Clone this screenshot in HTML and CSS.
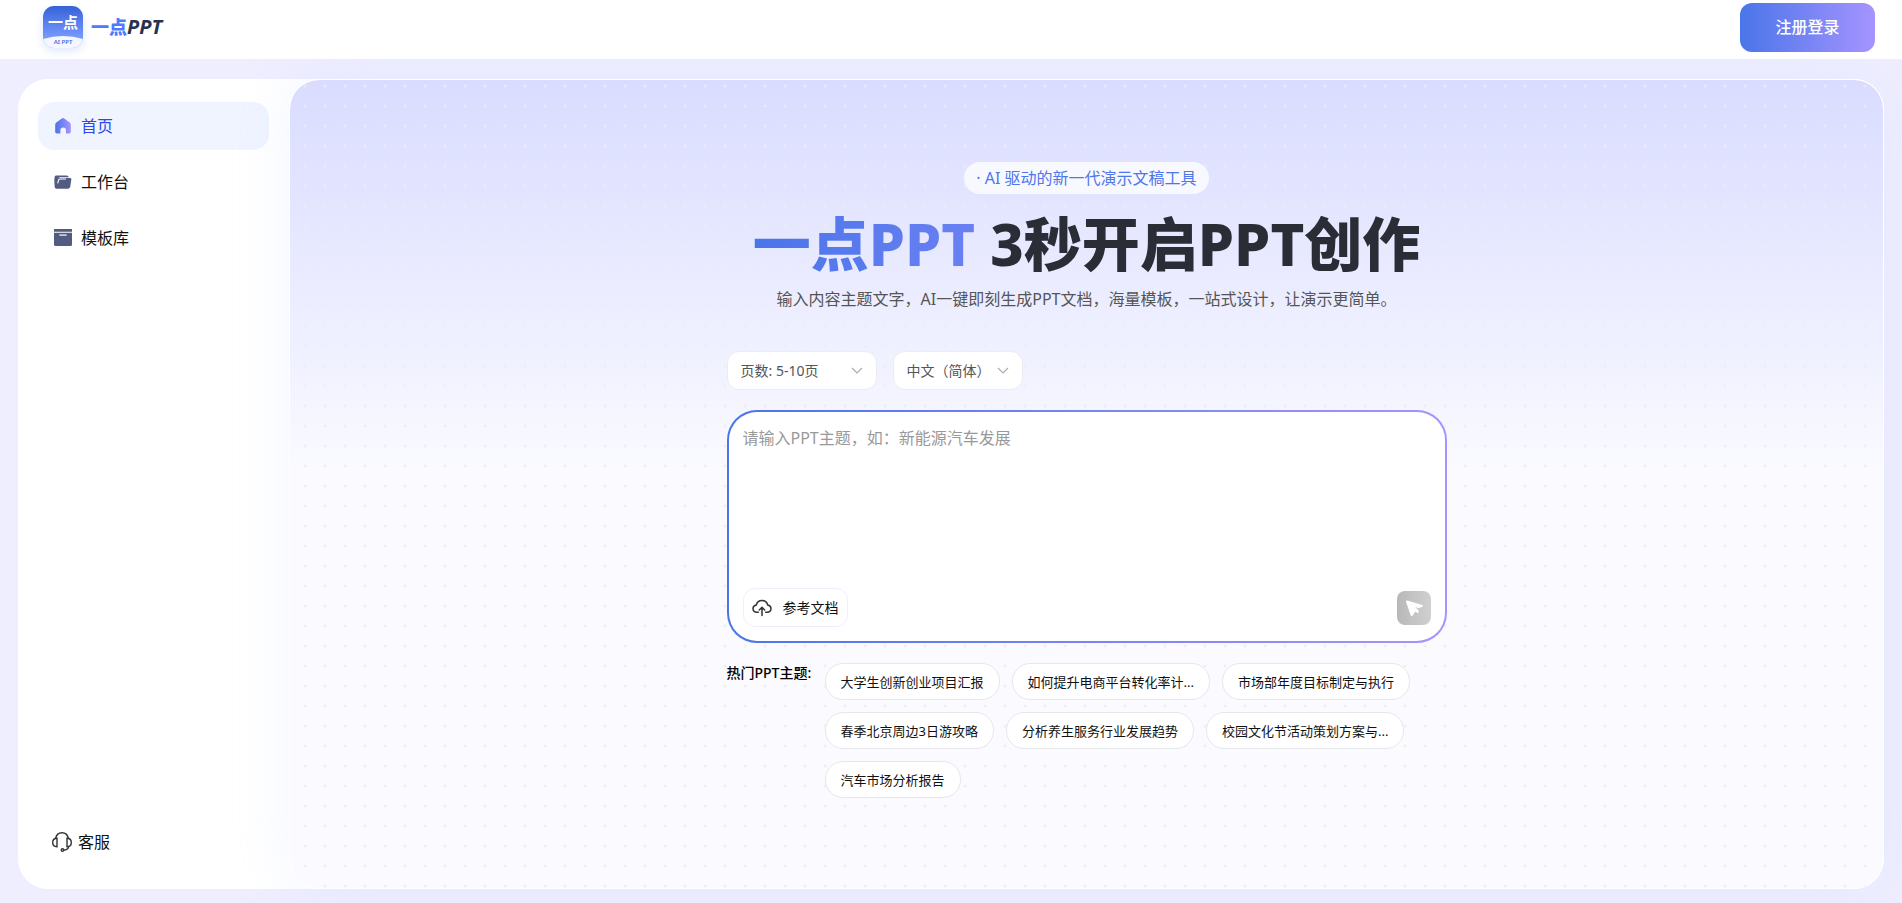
FILE: index.html
```html
<!DOCTYPE html>
<html lang="zh-CN">
<head>
<meta charset="utf-8">
<title>一点PPT</title>
<meta name="viewport" content="width=device-width, initial-scale=1">
<link rel="stylesheet" href="styles.css">
</head>
<body>
<header class="topbar">
  <a class="brand" href="#">
    <span class="brand-mark">
      <svg class="brand-wave" viewBox="0 0 40 42" aria-hidden="true"><path d="M0 33Q20 27 40 33V42H0Z" fill="#f4f7ff"/></svg>
      <span class="brand-glyph">一点</span>
      <span class="brand-sub">AI PPT</span>
    </span>
    <span class="brand-name"><span class="brand-cn">一点</span>PPT</span>
  </a>
  <button class="login" type="button">注册登录</button>
</header>
<div class="shell">
  <aside class="sidebar">
    <nav class="nav">
      <a class="nav-item active" href="#">
        <svg class="nav-icon" viewBox="0 0 18 18" aria-hidden="true">
          <defs><linearGradient id="home" x1="0" x2="1"><stop offset="0" stop-color="#4a73e8"/><stop offset="1" stop-color="#a594ff"/></linearGradient></defs>
          <path d="M7.8 1.5Q9 .6 10.200 1.500L15.700 5.600Q16.800 6.500 16.800 7.800V14.800Q16.800 16.500 15.100 16.500H12V13.200Q12 10.500 9.200 10.500T6.400 13.200V16.500H2.900Q1.200 16.500 1.200 14.800V7.800Q1.200 6.500 2.300 5.600Z" fill="url(#home)"/>
        </svg>
        <span>首页</span>
      </a>
      <a class="nav-item" href="#">
        <svg class="nav-icon" viewBox="0 0 18 18" aria-hidden="true">
          <path d="M2 2.500H12.500Q14.500 2.500 14.800 4.300H6.200Q3.700 4.300 3.200 6.800L2 13.500Q.6 12 .6 10V4Q.6 2.500 2 2.500Z" fill="#525c80"/>
          <path d="M.6 5.500L6.400 4.900H16.300Q17.500 5 17.300 6.500L16.300 13.600Q16 15.700 14 15.700H2.600Q.6 15.700 .6 13.500Z" fill="#525c80"/>
          <path d="M3.700 10.300L4.500 7.300Q4.800 6 6.200 6H14.500" fill="none" stroke="#fff" stroke-width="1.100" stroke-dasharray="11 9"/>
        </svg>
        <span>工作台</span>
      </a>
      <a class="nav-item" href="#">
        <svg class="nav-icon" viewBox="0 0 18 18" aria-hidden="true">
          <path d="M.5 0H17.500Q18 0 18 .5V2.700H0V.5Q0 0 .5 0ZM0 3.700H18V15.500Q18 17 16.500 17H1.500Q0 17 0 15.500Z" fill="#525c80"/>
          <path d="M5.300 5.200H12.700V6.500Q12.700 7 12 7H6Q5.300 7 5.300 6.500Z" fill="#c9cddd"/>
        </svg>
        <span>模板库</span>
      </a>
    </nav>
    <a class="service" href="#">
      <svg class="service-icon" viewBox="0 0 20 20" fill="none" stroke="#333" stroke-width="1.400" aria-hidden="true">
        <path d="M3.600 6.500C4.300 3 6.800.8 10 .8S15.700 3 16.400 6.500"/>
        <path d="M5 6.300V14.700C2 14.700.7 13 .7 10.500S2 6.300 5 6.300ZM15 6.300V14.700C18 14.700 19.300 13 19.300 10.500S18 6.300 15 6.300Z"/>
        <path d="M16.700 14.200C16.500 17 14.500 18 11.800 18"/><circle cx="10.500" cy="18" r="1.300"/>
      </svg>
      <span>客服</span>
    </a>
  </aside>
  <main class="main">
    <div class="content">
      <p class="tagline"><span>· AI 驱动的新一代演示文稿工具</span></p>
      <h1 class="title"><span class="title-brand">一点PPT</span> 3秒开启PPT创作</h1>
      <p class="subtitle">输入内容主题文字，AI一键即刻生成PPT文档，海量模板，一站式设计，让演示更简单。</p>
      <div class="options">
        <div class="select pages">
          <select aria-label="页数"><option>页数: 5-10页</option></select>
          <svg class="chevron" viewBox="0 0 12 8" aria-hidden="true"><path d="M1 1L6 6L11 1"/></svg>
        </div>
        <div class="select lang">
          <select aria-label="语言"><option>中文（简体）</option></select>
          <svg class="chevron" viewBox="0 0 12 8" aria-hidden="true"><path d="M1 1L6 6L11 1"/></svg>
        </div>
      </div>
      <form class="prompt">
        <textarea class="prompt-text" aria-label="PPT主题" placeholder="请输入PPT主题，如：新能源汽车发展"></textarea>
        <div class="prompt-bar">
          <button class="upload" type="button">
            <svg class="upload-icon" viewBox="0 0 20 20" fill="none" stroke="#333" stroke-width="1.500" stroke-linecap="round" stroke-linejoin="round" aria-hidden="true">
              <path d="M6.300 14.300H5C2.600 14.300 1 12.700 1 10.600C1 8.700 2.300 7.300 4.300 7C5 4.200 7.200 2.600 10 2.600S15 4.200 15.700 7C17.700 7.300 19 8.700 19 10.600C19 12.700 17.400 14.300 15 14.300H13.700"/>
              <path d="M10 17.500V9.500M7.300 12L10 9.300L12.700 12"/>
            </svg>
            <span>参考文档</span>
          </button>
          <button class="send" type="submit" aria-label="发送">
            <svg class="send-icon" viewBox="0 0 34 34" aria-hidden="true"><path d="M10.200 9.600L25.300 13.900Q27 14.700 25.300 15.800L21.600 17.300L18 15.800L21.600 19.400V21.500Q21 22.600 20 21.700L18.400 20.600L15.300 25Q14.300 25.700 13.700 24.500L9.100 10.900Q8.900 9.300 10.200 9.600Z" fill="#fff"/></svg>
          </button>
        </div>
      </form>
      <div class="topics">
        <span class="topics-label">热门PPT主题:</span>
        <div class="chips">
          <button class="chip" type="button">大学生创新创业项目汇报</button>
          <button class="chip" type="button">如何提升电商平台转化率计...</button>
          <button class="chip" type="button">市场部年度目标制定与执行</button>
          <button class="chip" type="button">春季北京周边3日游攻略</button>
          <button class="chip" type="button">分析养生服务行业发展趋势</button>
          <button class="chip" type="button">校园文化节活动策划方案与...</button>
          <button class="chip" type="button">汽车市场分析报告</button>
        </div>
      </div>
    </div>
  </main>
</div>
</body>
</html>
```
FILE: styles.css
```css
* {
  box-sizing: border-box;
}

body {
  margin: 0;
  min-height: 100vh;
  display: flex;
  flex-direction: column;
  background: #efeeff;
  color: #111;
  font-family: "Noto Sans", "Noto Sans CJK SC", sans-serif;
  font-size: 16px;
  line-height: 24px;
}

a {
  color: inherit;
  text-decoration: none;
}

button,
select,
textarea {
  font: inherit;
  color: inherit;
}

button {
  cursor: pointer;
}

.topbar {
  position: relative;
  z-index: 1;
  display: flex;
  align-items: center;
  justify-content: space-between;
  height: 59px;
  padding: 0 27px 5px 43px;
  background: #fff;
}

.brand {
  display: flex;
  align-items: center;
  gap: 8px;
}

.brand-mark {
  display: grid;
  grid-template-rows: 32px 10px;
  justify-items: center;
  width: 40px;
  height: 42px;
  border-radius: 11px;
  overflow: hidden;
  background: linear-gradient(#3562d8, #7d9dff 80%);
  box-shadow: 0 3px 10px #e0e7ff;
}

.brand-wave {
  grid-area: 1 / 1 / 3 / 2;
  width: 40px;
  height: 42px;
}

.brand-glyph {
  grid-area: 1 / 1;
  color: #fff;
  font-size: 15px;
  font-weight: 700;
  line-height: 32px;
}

.brand-sub {
  grid-area: 2 / 1;
  color: #4a6fe0;
  font-size: 6px;
  font-weight: 600;
  line-height: 8px;
}

.brand-name {
  color: #27324f;
  font-size: 20px;
  font-style: italic;
  font-weight: 700;
  line-height: 28px;
}

.brand-cn {
  color: #4d7aff;
  font-size: 18px;
  font-style: normal;
  font-weight: 900;
}

.login {
  width: 135px;
  height: 49px;
  padding: 0;
  border: 0;
  border-radius: 12px;
  background: linear-gradient(90deg, #4a75e9, #a594ff);
  color: #fff;
  font-weight: 500;
}

.shell {
  flex: 1;
  display: flex;
  margin: 20px 18px 14px;
  border-radius: 30px;
  background: #fff;
}

.sidebar {
  display: flex;
  flex-direction: column;
  justify-content: space-between;
  width: 271px;
  padding: 23px 20px 35px;
}

.nav {
  display: flex;
  flex-direction: column;
  gap: 8px;
}

.nav-item {
  display: flex;
  align-items: center;
  gap: 9px;
  height: 48px;
  padding: 0 16px;
  border-radius: 16px;
}

.nav-item.active {
  background: #eff4ff;
  color: #2b47ef;
}

.nav-icon {
  width: 18px;
  height: 18px;
}

.service {
  display: flex;
  align-items: center;
  gap: 6px;
  padding-left: 14px;
}

.service-icon {
  width: 20px;
  height: 20px;
}

.main {
  flex: 1;
  min-width: 0;
  display: flex;
  justify-content: center;
  padding: 82px 24px 24px;
  border: 1px solid #fff;
  border-radius: 30px;
  background:
    radial-gradient(circle, rgba(236, 236, 240, 0.8) 1px, transparent 2px) 5px -4px / 20px 20px padding-box,
    linear-gradient(#d9dcff, #fafaff 390px) padding-box;
  box-shadow: 0 0 60px rgba(190, 205, 255, 0.2);
}

.content {
  width: 100%;
  max-width: 720px;
}

.tagline {
  display: flex;
  justify-content: center;
  margin: 0;
}

.tagline span {
  padding: 4px 12px;
  border-radius: 16px;
  background: #f7f9ff;
  color: #4f76ea;
}

.title {
  margin: 14px 0 0;
  color: #2a2d36;
  font-size: 58px;
  font-weight: 800;
  line-height: 72px;
  text-align: center;
  white-space: nowrap;
}

.title-brand {
  background: linear-gradient(90deg, #4a75e9, #6a80f2);
  background-clip: text;
  color: transparent;
}

.subtitle {
  margin: 7px 0 0;
  color: #555;
  text-align: center;
}

.options {
  display: flex;
  gap: 16px;
  margin-top: 40px;
}

.select {
  display: grid;
  align-items: center;
  height: 39px;
  border: 1px solid #ebebf2;
  border-radius: 12px;
  background: #fff;
  color: #555;
  font-size: 14px;
}

.select.pages {
  width: 150px;
}

.select.lang {
  width: 130px;
}

.select select {
  grid-area: 1 / 1;
  appearance: none;
  width: 100%;
  height: 100%;
  padding: 0 13px;
  border: 0;
  background: transparent;
}

.chevron {
  grid-area: 1 / 1;
  justify-self: end;
  width: 12px;
  height: 8px;
  margin-right: 13px;
  fill: none;
  stroke: #a8abb2;
  stroke-width: 1.2;
  pointer-events: none;
}

.prompt {
  display: flex;
  flex-direction: column;
  height: 233px;
  margin-top: 20px;
  padding: 14px;
  border: 2px solid transparent;
  border-radius: 30px;
  background:
    linear-gradient(#fff, #fff) padding-box,
    linear-gradient(90deg, #4a75e9, #a594ff) border-box;
}

.prompt-text {
  flex: 1;
  padding: 0;
  border: 0;
  outline: 0;
  resize: none;
  background: transparent;
}

.prompt-text::placeholder {
  color: #999;
}

.prompt-bar {
  display: flex;
  align-items: center;
  justify-content: space-between;
}

.upload {
  display: flex;
  align-items: center;
  gap: 11px;
  height: 39px;
  padding: 0 8px;
  border: 1px solid #efeeff;
  border-radius: 12px;
  background: #fff;
  font-size: 14px;
}

.upload-icon {
  width: 20px;
  height: 20px;
}

.send {
  width: 34px;
  height: 34px;
  padding: 0;
  border: 0;
  border-radius: 8px;
  background: linear-gradient(90deg, #b8b8b8, #d0d0d0);
}

.send-icon {
  display: block;
  width: 34px;
  height: 34px;
}

.topics {
  display: flex;
  gap: 12px;
  margin-top: 20px;
}

.topics-label {
  flex: none;
  width: 86px;
  color: #000;
  font-size: 14px;
  font-weight: 500;
  line-height: 20px;
  white-space: nowrap;
}

.chips {
  display: flex;
  flex-wrap: wrap;
  gap: 12px;
}

.chip {
  height: 37px;
  padding: 0 15px;
  border: 1px solid #e6e6ed;
  border-radius: 18px;
  background: #fff;
  font-size: 13px;
}
```
